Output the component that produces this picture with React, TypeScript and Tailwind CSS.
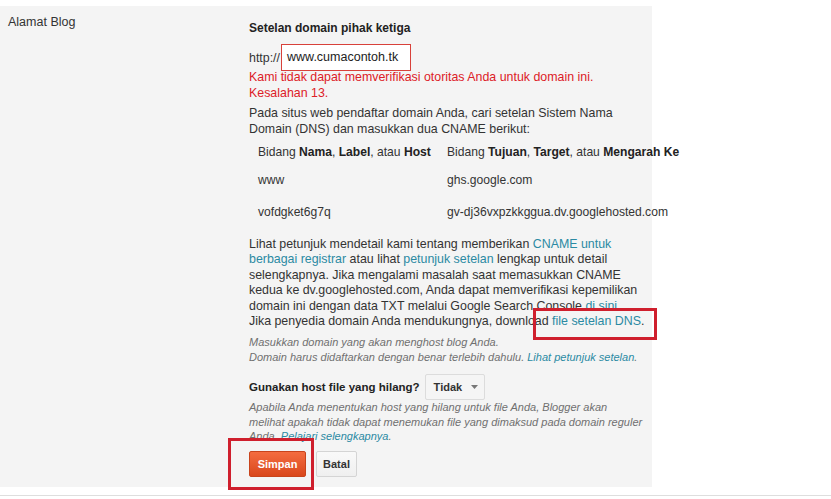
import React from "react";

const Link = ({ children }: { children: React.ReactNode }) => (
  <span className="text-[#2b8aa3]">{children}</span>
);

export default function App() {
  return (
    <div
      className="relative w-[831px] h-[499px] bg-white overflow-hidden text-[#333]"
      style={{ fontFamily: '"Liberation Sans", Arial, sans-serif' }}
    >
      <div className="pt-[6px]">
        <div className="flex w-[652px] h-[481px] bg-[#f4f4f4]">
          <div className="w-[249px] shrink-0 pl-[8px] pt-[8px] text-[12.5px] leading-[16px] text-[#333]">
            Alamat Blog
          </div>
          <div className="w-[402px] shrink-0 pt-[14px] flex flex-col text-[12.4px]">
            <div className="text-[12px] font-bold leading-[16px] text-[#222]">
              Setelan domain pihak ketiga
            </div>
            <div className="mt-[8px] flex items-center h-[27px]">
              <span className="leading-[16px]">http://</span>
              <div className="ml-[1px] w-[130px] h-[27px] bg-white border border-[#d8413a] flex items-center pl-[5px] text-[12.5px] text-[#222]">
                www.cumacontoh.tk
              </div>
            </div>
            <div className="mt-[-2px] text-[#dd2027] leading-[16px] whitespace-nowrap">
              <div>Kami tidak dapat memverifikasi otoritas Anda untuk domain ini.</div>
              <div>Kesalahan 13.</div>
            </div>
            <div className="mt-[5px] leading-[15.5px] whitespace-nowrap">
              Pada situs web pendaftar domain Anda, cari setelan Sistem Nama
              <br />
              Domain (DNS) dan masukkan dua CNAME berikut:
            </div>
            <div className="mt-[7px] pl-[9px] whitespace-nowrap leading-[16px] text-[12.1px]">
              <div className="flex">
                <div className="w-[189px] shrink-0">
                  Bidang <b className="text-[#222]">Nama</b>, <b className="text-[#222]">Label</b>, atau{" "}
                  <b className="text-[#222]">Host</b>
                </div>
                <div className="shrink-0">
                  Bidang <b className="text-[#222]">Tujuan</b>, <b className="text-[#222]">Target</b>, atau{" "}
                  <b className="text-[#222]">Mengarah Ke</b>
                </div>
              </div>
              <div className="flex mt-[12px]">
                <div className="w-[189px] shrink-0">www</div>
                <div className="shrink-0">ghs.google.com</div>
              </div>
              <div className="flex mt-[16px]">
                <div className="w-[189px] shrink-0">vofdgket6g7q</div>
                <div className="shrink-0">gv-dj36vxpzkkggua.dv.googlehosted.com</div>
              </div>
            </div>
            <div className="mt-[17px] leading-[15.4px] whitespace-nowrap">
              Lihat petunjuk mendetail kami tentang memberikan <Link>CNAME untuk</Link>
              <br />
              <Link>berbagai registrar</Link> atau lihat <Link>petunjuk setelan</Link> lengkap untuk detail
              <br />
              selengkapnya. Jika mengalami masalah saat memasukkan CNAME
              <br />
              kedua ke dv.googlehosted.com, Anda dapat memverifikasi kepemilikan
              <br />
              domain ini dengan data TXT melalui Google Search Console <Link>di sini</Link>.
              <br />
              Jika penyedia domain Anda mendukungnya, download <Link>file setelan DNS</Link>.
            </div>
            <div className="mt-[6px] text-[11px] italic leading-[15px] text-[#707070] whitespace-nowrap">
              Masukkan domain yang akan menghost blog Anda.
              <br />
              Domain harus didaftarkan dengan benar terlebih dahulu. <Link>Lihat petunjuk setelan</Link>.
            </div>
            <div className="mt-[9px] flex items-center h-[26px]">
              <span className="text-[11.5px] font-bold text-[#222] leading-[16px]">
                Gunakan host file yang hilang?
              </span>
              <div className="ml-[5px] w-[60px] h-[26px] bg-[#f5f5f5] border border-[#dcdcdc] rounded-[2px] flex items-center pl-[8px] gap-[9px]">
                <span className="text-[11px] font-bold text-[#333]">Tidak</span>
                <svg width="7" height="4" viewBox="0 0 7 4">
                  <path d="M0 0 L7 0 L3.5 4 Z" fill="#777" />
                </svg>
              </div>
            </div>
            <div className="text-[11px] italic leading-[14.5px] text-[#707070] whitespace-nowrap">
              Apabila Anda menentukan host yang hilang untuk file Anda, Blogger akan
              <br />
              melihat apakah tidak dapat menemukan file yang dimaksud pada domain reguler
              <br />
              Anda. <Link>Pelajari selengkapnya</Link>.
            </div>
            <div className="mt-[7.5px] flex gap-[10px]">
              <button className="w-[57px] h-[26px] rounded-[2px] border border-[#c8441c] bg-gradient-to-b from-[#f46c3f] to-[#d9471b] text-white text-[11px] font-bold">
                Simpan
              </button>
              <button className="w-[41px] h-[26px] rounded-[2px] border border-[#d4d4d4] bg-gradient-to-b from-[#f9f9f9] to-[#efefef] text-[#333] text-[11px] font-bold">
                Batal
              </button>
            </div>
          </div>
        </div>
        <div className="mt-[8px] border-t border-[#dedede]" />
      </div>
      <div className="absolute left-[533px] top-[308px] w-[124px] h-[32px] border-[3px] border-[#cf1f2d]" />
      <div className="absolute left-[228px] top-[438px] w-[86px] h-[52px] border-[3px] border-[#cf1f2d]" />
    </div>
  );
}
